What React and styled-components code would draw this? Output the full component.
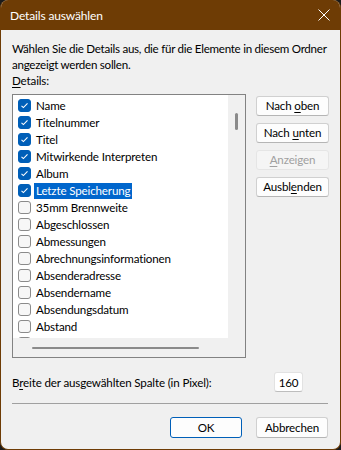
import React from "react";
import styled, { createGlobalStyle } from "styled-components";

const GlobalStyle = createGlobalStyle`
  html, body { margin: 0; padding: 0; background: #1b1b1b; }
  body {
    font-family: Lato, "Liberation Sans", sans-serif;
    font-size: 11.6px;
    letter-spacing: -0.15px;
    color: #000;
  }
  * { box-sizing: border-box; }
`;

const Window = styled.div`
  width: 341px;
  height: 450px;
  background: #f0f0f0;
  border: 1px solid #6e3c05;
  border-top: none;
  border-radius: 8px;
  overflow: hidden;
  display: flex;
  flex-direction: column;
`;

const TitleBar = styled.div`
  height: 30px;
  flex: none;
  background: #6e3c05;
  color: #fff;
  display: flex;
  align-items: center;
  justify-content: space-between;
  padding: 0 10px 0 9px;
  font-size: 12px;
`;

const CloseIcon = () => (
  <svg width="12" height="12" viewBox="0 0 12 12">
    <path d="M0.5 0.5 L11.5 11.5 M11.5 0.5 L0.5 11.5" stroke="#fff" strokeWidth="1" />
  </svg>
);

const Content = styled.div`
  flex: 1;
  display: flex;
  flex-direction: column;
  padding: 11px 11px 0 11px;
`;

const IntroLine = styled.div`
  line-height: 16px;
  white-space: nowrap;
  letter-spacing: -0.27px;
`;

const Label = styled.div`
  line-height: 16px;
`;

const U = styled.span`
  text-decoration: underline;
  text-underline-offset: 2px;
`;

const Main = styled.div`
  display: flex;
  gap: 10px;
  margin-top: 5px;
`;

const ListBox = styled.div`
  width: 234px;
  height: 264px;
  border: 1px solid #828282;
  display: grid;
  grid-template-columns: 215px 17px;
  grid-template-rows: 243px 19px;
  background: #f0f0f0;
`;

const Items = styled.div`
  background: #fff;
  overflow: hidden;
  padding: 2px 0 0 5px;
`;

const Row = styled.div`
  height: 17px;
  display: flex;
  align-items: center;
  white-space: nowrap;
`;

const Box = styled.span`
  width: 13px;
  height: 13px;
  flex: none;
  border-radius: 3px;
  display: flex;
  align-items: center;
  justify-content: center;
  background: ${(p) => (p.$checked ? "#005fb8" : "#f7f7f7")};
  border: 1px solid ${(p) => (p.$checked ? "#005fb8" : "#8b8b8b")};
`;

const ItemText = styled.span`
  margin-left: 3px;
  padding: 0 2px;
  line-height: 16px;
  background: ${(p) => (p.$selected ? "#0066cc" : "transparent")};
  color: ${(p) => (p.$selected ? "#fff" : "#000")};
`;

const VTrack = styled.div`
  display: flex;
  justify-content: center;
  padding-top: 18px;
`;

const VThumb = styled.div`
  width: 3px;
  height: 17px;
  border-radius: 2px;
  background: #8a8a8a;
`;

const HTrack = styled.div`
  display: flex;
  align-items: center;
  padding-left: 19px;
`;

const HThumb = styled.div`
  width: 167px;
  height: 2px;
  border-radius: 1px;
  background: #8a8a8a;
`;

const Corner = styled.div`
  background: #f0f0f0;
`;

const SideButtons = styled.div`
  display: flex;
  flex-direction: column;
  gap: 7px;
  padding-top: 2px;
`;

const Button = styled.button`
  font-family: inherit;
  font-size: 11.6px;
  letter-spacing: -0.15px;
  width: ${(p) => p.$w || 73}px;
  height: ${(p) => p.$h || 20}px;
  padding: 0;
  border-radius: 3px;
  line-height: 16px;
  background: ${(p) => (p.disabled ? "#f5f5f5" : "#fdfdfd")};
  color: ${(p) => (p.disabled ? "#a0a0a0" : "#000")};
  border: 1px solid ${(p) => (p.$default ? "#005fb8" : p.disabled ? "#e5e5e5" : "#d0d0d0")};
  border-bottom-color: ${(p) => (p.$default ? "#005fb8" : p.disabled ? "#e5e5e5" : "#b5b5b5")};
`;

const WidthRow = styled.div`
  margin-top: 14px;
  display: flex;
  align-items: center;
  justify-content: space-between;
  padding-right: 26px;
`;

const Input = styled.div`
  width: 29px;
  height: 20px;
  background: #fff;
  border: 1px solid #e2e2e2;
  border-bottom-color: #bdbdbd;
  border-radius: 3px;
  display: flex;
  align-items: center;
  justify-content: center;
`;

const Separator = styled.div`
  margin-top: 11px;
  width: 316px;
  height: 1px;
  background: #a0a0a0;
`;

const Footer = styled.div`
  display: flex;
  justify-content: flex-end;
  gap: 14px;
  margin-top: 13px;
  padding-right: 1px;
`;

const items = [
  ["Name", true],
  ["Titelnummer", true],
  ["Titel", true],
  ["Mitwirkende Interpreten", true],
  ["Album", true],
  ["Letzte Speicherung", true, true],
  ["35mm Brennweite", false],
  ["Abgeschlossen", false],
  ["Abmessungen", false],
  ["Abrechnungsinformationen", false],
  ["Absenderadresse", false],
  ["Absendername", false],
  ["Absendungsdatum", false],
  ["Abstand", false],
  ["Abteilung", false],
];

const Check = () => (
  <svg width="11" height="11" viewBox="0 0 11 11">
    <path d="M2.5 5.8 L4.4 7.6 L8.5 3.4" fill="none" stroke="#fff" strokeWidth="1.1" />
  </svg>
);

export default function App() {
  return (
    <>
      <GlobalStyle />
      <Window>
        <TitleBar>
          <span>Details auswählen</span>
          <CloseIcon />
        </TitleBar>
        <Content>
          <IntroLine>Wählen Sie die Details aus, die für die Elemente in diesem Ordner</IntroLine>
          <IntroLine>angezeigt werden sollen.</IntroLine>
          <Label>
            <U>D</U>etails:
          </Label>
          <Main>
            <ListBox>
              <Items>
                {items.map(([name, checked, selected]) => (
                  <Row key={name}>
                    <Box $checked={checked}>{checked && <Check />}</Box>
                    <ItemText $selected={selected}>{name}</ItemText>
                  </Row>
                ))}
              </Items>
              <VTrack>
                <VThumb />
              </VTrack>
              <HTrack>
                <HThumb />
              </HTrack>
              <Corner />
            </ListBox>
            <SideButtons>
              <Button>
                Nach <U>o</U>ben
              </Button>
              <Button>
                Nach <U>u</U>nten
              </Button>
              <Button disabled>
                <U>A</U>nzeigen
              </Button>
              <Button>
                Ausbl<U>e</U>nden
              </Button>
            </SideButtons>
          </Main>
          <WidthRow>
            <span>
              B<U>r</U>eite der ausgewählten Spalte (in Pixel):
            </span>
            <Input>160</Input>
          </WidthRow>
          <Separator />
          <Footer>
            <Button $w={72} $h={21} $default>
              OK
            </Button>
            <Button $w={72} $h={21}>
              Abbrechen
            </Button>
          </Footer>
        </Content>
      </Window>
    </>
  );
}
